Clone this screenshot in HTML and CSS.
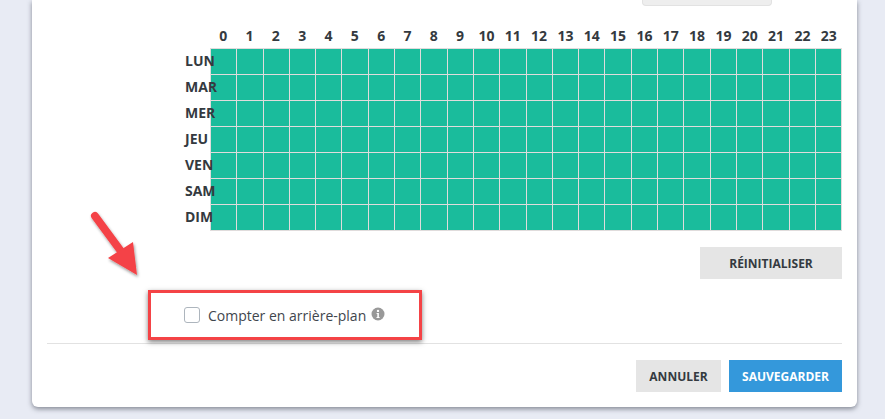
FILE: index.html
```html
<!DOCTYPE html>
<html lang="fr">
<head>
    <meta charset="UTF-8">
    <title>Planification</title>
    <link rel="stylesheet" href="styles.css">
</head>
<body>
    <div class="card">
        <div class="top-row"><div class="select-stub"></div></div>

        <div class="schedule">
            <div class="hours" id="hours"></div>
            <div class="days" id="days"></div>
        </div>

        <div class="reset-row">
            <button class="btn btn-grey btn-reset">RÉINITIALISER</button>
        </div>

        <label class="background-option">
            <span class="checkbox"></span>
            <span>Compter en arrière-plan</span>
            <svg class="info" viewBox="0 0 14 14" width="14" height="14">
                <circle cx="7" cy="7" r="6.5" fill="#999"/>
                <circle cx="7" cy="3.9" r="1.2" fill="#fff"/>
                <path d="M5.6 6h2.3v4.1h.7v1H5.5v-1h.8V7h-.7z" fill="#fff"/>
            </svg>
        </label>

        <div class="footer">
            <button class="btn btn-grey btn-cancel">ANNULER</button>
            <button class="btn btn-blue btn-save">SAUVEGARDER</button>
        </div>

        <!-- annotation -->
        <div class="note-box"></div>
        <svg class="note-arrow" viewBox="0 0 70 80" width="70" height="80">
            <defs>
                <filter id="arrow-shadow" x="-30%" y="-30%" width="170%" height="170%">
                    <feDropShadow dx="1" dy="2" stdDeviation="1.5" flood-color="#000" flood-opacity="0.4"/>
                </filter>
            </defs>
            <g filter="url(#arrow-shadow)">
                <path d="M16 14 L44 52" stroke="#f44346" stroke-width="8" stroke-linecap="round" fill="none"/>
                <path d="M54 40 L29 56 L58 73 Z" fill="#f44346"/>
            </g>
        </svg>
    </div>

    <script>
        const days = ['LUN', 'MAR', 'MER', 'JEU', 'VEN', 'SAM', 'DIM'];
        const hours = document.getElementById('hours');
        const daysBox = document.getElementById('days');

        for (let h = 0; h < 24; h++) {
            let hour = document.createElement('div');
            hour.className = 'hour';
            hour.textContent = h;
            hours.appendChild(hour);
        }

        days.forEach(function (day) {
            let row = document.createElement('div');
            row.className = 'day-row';
            let label = document.createElement('div');
            label.className = 'day-label';
            label.textContent = day;
            row.appendChild(label);
            for (let h = 0; h < 24; h++) {
                let cell = document.createElement('div');
                cell.className = 'cell';
                row.appendChild(cell);
            }
            daysBox.appendChild(row);
        });
    </script>
</body>
</html>
```

FILE: styles.css
```css
html, body { height: 100%; }
body {
    margin: 0;
    background: #e8ebf4;
    font-family: "Open Sans", sans-serif;
    color: #343a40;
    overflow: hidden;
}

.card {
    position: relative;
    box-sizing: border-box;
    width: 825px;
    height: 407px;
    margin-left: 32px;
    padding: 0 15px;
    background: #fff;
    border-radius: 0 0 6px 6px;
    box-shadow: 0 2px 5px rgba(50, 55, 70, 0.55);
}

.top-row { display: flex; justify-content: flex-end; height: 22px; padding-right: 70px; }
.select-stub {
    box-sizing: border-box;
    width: 130px;
    height: 6px;
    background: #eee;
    border: 1px solid #e2e2e2;
    border-top: 0;
    border-radius: 0 0 4px 4px;
}

.schedule { margin-left: 163px; }

.hours { display: flex; height: 26px; align-items: center; }
.hour {
    flex: 1;
    text-align: center;
    font-size: 14px;
    font-weight: 700;
}

.days { border-top: 1px solid #e0dcdc; border-left: 1px solid #e0dcdc; }
.day-row { display: flex; position: relative; height: 26px; }
.day-label {
    position: absolute;
    left: -26px;
    top: 0;
    line-height: 24px;
    font-size: 14px;
    font-weight: 700;
    white-space: nowrap;
    z-index: 1;
}
.cell {
    flex: 1;
    background: #1abc9c;
    border-right: 1px solid #e0dcdc;
    border-bottom: 1px solid #e0dcdc;
}

.btn {
    border: 0;
    height: 32px;
    padding: 0;
    font-family: "Open Sans", sans-serif;
    font-size: 12px;
    font-weight: 700;
}
.btn-grey { background: #e5e5e5; color: #343a40; }
.btn-blue { background: #3498db; color: #fff; }
.btn-reset { width: 142px; }
.btn-cancel { width: 85px; }
.btn-save { width: 113px; }

.reset-row { display: flex; justify-content: flex-end; margin-top: 16px; }

.background-option {
    display: flex;
    align-items: center;
    box-sizing: border-box;
    height: 64px;
    padding-top: 8px;
    margin-left: 137px;
    font-size: 14px;
    color: #3f464d;
}
.checkbox {
    box-sizing: border-box;
    width: 16px;
    height: 16px;
    margin-right: 8px;
    background: #fff;
    border: 1px solid #adb5bd;
    border-radius: 3px;
}
.info { margin-left: 5px; margin-top: -3px; }

.footer {
    display: flex;
    justify-content: flex-end;
    gap: 8px;
    padding-top: 16px;
    border-top: 1px solid #e2e2e2;
}

.note-box {
    position: absolute;
    left: 116px;
    top: 290px;
    width: 274px;
    height: 50px;
    box-sizing: border-box;
    border: 3px solid #f44346;
    box-shadow: 0 2px 5px rgba(0, 0, 0, 0.5);
}
.note-arrow { position: absolute; left: 47px; top: 202px; }
```
